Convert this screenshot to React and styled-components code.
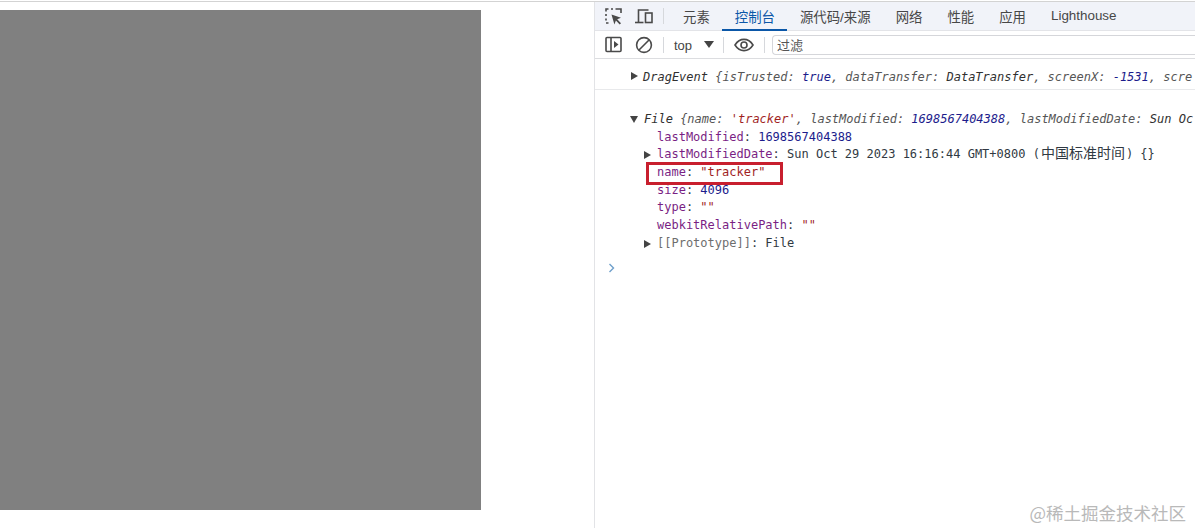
import React from 'react'
import styled, { createGlobalStyle } from 'styled-components'

const GlobalStyle = createGlobalStyle`
    html, body { margin:0; padding:0; background:#fff; }
    body { font-family:"Liberation Sans","Noto Sans CJK SC",sans-serif; }
`

const Page = styled.div`
    position:relative;
    width:1195px;
    height:528px;
    overflow:hidden;
    display:flex;
    flex-direction:column;
    background:#fff;
`
const TopLine = styled.div`
    height:1px;
    margin-top:1px;
    background:#d3d3d3;
    flex:none;
`
const Body = styled.div`
    flex:1;
    display:flex;
    min-height:0;
`
const Viewport = styled.div`
    width:594px;
    flex:none;
    padding-top:8px;
`
const GrayBox = styled.div`
    width:481px;
    height:500px;
    background:#808080;
`
const Devtools = styled.div`
    flex:1;
    border-left:1px solid #e2e3e6;
    display:flex;
    flex-direction:column;
    min-width:0;
`
const TabBar = styled.div`
    height:29px;
    box-sizing:border-box;
    background:#f1f3f9;
    border-bottom:1px solid #e3e4e8;
    display:flex;
    align-items:stretch;
    padding-left:10px;
`
const IconSlot = styled.div`
    width:${props => props.w || 30}px;
    display:flex;
    align-items:center;
    justify-content:${props => props.align || 'flex-start'};
    flex:none;
`
const Divider = styled.div`
    width:1px;
    height:16px;
    background:#d6d8dc;
    align-self:center;
    flex:none;
    margin-right:${props => props.gap || 0}px;
`
const Tab = styled.div`
    padding:0 12.5px;
    display:flex;
    align-items:center;
    font-size:13.4px;
    color:${props => props.active ? '#0b57a8' : '#474747'};
    border-bottom:2px solid ${props => props.active ? '#0b57a8' : 'transparent'};
    margin-bottom:-1px;
`
const Toolbar = styled.div`
    height:28px;
    box-sizing:border-box;
    border-bottom:1px solid #dcdde0;
    display:flex;
    align-items:center;
    padding-left:10px;
`
const Context = styled.div`
    display:flex;
    align-items:center;
    width:59px;
    padding:1px 0 0 10px;
    box-sizing:border-box;
    font-size:13px;
    color:#444;
    flex:none;
`
const Caret = styled.span`
    width:0;
    height:0;
    margin:-1px 0 0 12px;
    border-left:5px solid transparent;
    border-right:5px solid transparent;
    border-top:7px solid #444;
`
const FilterBox = styled.div`
    margin-left:7px;
    flex:1;
    height:20px;
    box-sizing:border-box;
    border:1px solid #d5d6da;
    border-right:none;
    border-radius:4px 0 0 4px;
    font-size:13px;
    line-height:20px;
    padding-left:4px;
    color:#555;
`
const Console = styled.div`
    flex:1;
    font-family:"DejaVu Sans Mono","Noto Sans CJK SC",monospace;
    font-size:12px;
    line-height:17.7px;
    white-space:nowrap;
    overflow:hidden;
    color:#303942;
`
const EventRow = styled.div`
    height:31px;
    padding-top:10px;
    box-sizing:border-box;
    border-bottom:1px solid #e8e9eb;
    padding-left:48px;
    position:relative;
    font-style:italic;
    color:#555;
`
const FileGroup = styled.div`
    padding-top:21px;
`
const Row = styled.div`
    display:flex;
    align-items:center;
    height:17.7px;
    padding-left:${props => props.indent}px;
    font-style:${props => props.italic ? 'italic' : 'normal'};
    color:${props => props.italic ? '#555' : '#303942'};
`
const Arrow = styled.span`
    width:0;
    height:0;
    flex:none;
    margin-right:6px;
    ${props => props.down
        ? 'border-left:4px solid transparent;border-right:4px solid transparent;border-top:7px solid #444;'
        : 'border-top:4px solid transparent;border-bottom:4px solid transparent;border-left:7px solid #444;'}
`
const EventArrow = styled(Arrow)`
    position:absolute;
    left:36px;
    top:13px;
`
const Key = styled.span`
    color:${props => props.dim ? '#6e6e6e' : '#7a1f84'};
`
const Num = styled.span`
    color:#1c1c8c;
`
const Str = styled.span`
    color:#a11f1f;
`
const Obj = styled.span`
    color:#303030;
`
const Plain = styled.span`
    white-space:pre;
`
const ZoneName = styled.span`
    font-size:14px;
    line-height:1;
    margin:0 1px;
`
const NameRow = styled(Row)`
    position:relative;
`
const Highlight = styled.div`
    position:absolute;
    left:51px;
    top:-2px;
    width:137px;
    height:23px;
    box-sizing:border-box;
    border:3px solid #c81f2e;
`
const PromptRow = styled.div`
    padding:8px 0 0 13px;
    height:15px;
    display:flex;
    align-items:center;
`
const Watermark = styled.div`
    position:absolute;
    right:9px;
    bottom:3px;
    font-family:"Noto Sans CJK SC",sans-serif;
    font-size:17.5px;
    line-height:24px;
    color:#b9b9b9;
`

const InspectIcon = () => (
    <svg width="17" height="17" viewBox="0 0 17 17" fill="none" stroke="#4a4a4a" strokeWidth="1.6">
        <path d="M1 3.500V1h2.500M6 1h2M10.500 1h5.500v4M1 6v2M1 10.500v2M1 15h2.500" />
        <path d="M6.500 6.500l9.500 3.300-3.800 1.500 3.800 3.900-1.300 1.300-3.800-3.900-1.500 3.800z" fill="#4a4a4a" stroke="none" />
    </svg>
)
const DeviceIcon = () => (
    <svg width="18" height="16" viewBox="0 0 18 16" fill="none" stroke="#4a4a4a" strokeWidth="1.6">
        <path d="M3.500 14V2h10" />
        <path d="M0 14.500h8.500" />
        <rect x="10.500" y="5" width="6.500" height="9.500" />
    </svg>
)
const SidebarIcon = () => (
    <svg width="17" height="17" viewBox="0 0 17 17" fill="none" stroke="#4a4a4a" strokeWidth="1.6">
        <rect x="1" y="1.500" width="15" height="14" rx="1" />
        <path d="M6 1.500v14" />
        <path d="M9 5l4.500 3.500L9 12z" fill="#4a4a4a" stroke="none" />
    </svg>
)
const ClearIcon = () => (
    <svg width="18" height="18" viewBox="0 0 18 18" fill="none" stroke="#4a4a4a" strokeWidth="1.6">
        <circle cx="9" cy="9" r="7.400" />
        <path d="M4 14L14 4" />
    </svg>
)
const EyeIcon = () => (
    <svg width="20" height="14" viewBox="0 0 20 14" fill="none" stroke="#4a4a4a" strokeWidth="1.6">
        <path d="M1 7c2.400-3.800 5.400-5.600 9-5.600s6.600 1.800 9 5.600c-2.400 3.800-5.400 5.600-9 5.600S3.400 10.800 1 7z" />
        <circle cx="10" cy="7" r="3" />
    </svg>
)
const PromptIcon = () => (
    <svg width="8" height="10" viewBox="0 0 8 10" fill="none" stroke="#6f9fcb" strokeWidth="1.4">
        <path d="M1.500 1l4 4-4 4" />
    </svg>
)

const tabs = [
    { label: '元素' },
    { label: '控制台', active: true },
    { label: '源代码/来源' },
    { label: '网络' },
    { label: '性能' },
    { label: '应用' },
    { label: 'Lighthouse' },
]

const App = () => {
    return (
        <Page>
            <GlobalStyle />
            <TopLine />
            <Body>
                <Viewport>
                    <GrayBox />
                </Viewport>
                <Devtools>
                    <TabBar>
                        <IconSlot w={30}><InspectIcon /></IconSlot>
                        <IconSlot w={28}><DeviceIcon /></IconSlot>
                        <Divider gap={6.5} />
                        {tabs.map(tab => (
                            <Tab key={tab.label} active={tab.active}>{tab.label}</Tab>
                        ))}
                    </TabBar>
                    <Toolbar>
                        <IconSlot w={30}><SidebarIcon /></IconSlot>
                        <IconSlot w={28}><ClearIcon /></IconSlot>
                        <Divider />
                        <Context>top<Caret /></Context>
                        <Divider />
                        <IconSlot w={40} align="center"><EyeIcon /></IconSlot>
                        <Divider />
                        <FilterBox>过滤</FilterBox>
                    </Toolbar>
                    <Console>
                        <EventRow>
                            <EventArrow />
                            <Plain><Obj>DragEvent </Obj>{'{'}isTrusted: <Num>true</Num>, dataTransfer: <Obj>DataTransfer</Obj>, screenX: <Num>-1531</Num>, scre</Plain>
                        </EventRow>
                        <FileGroup>
                            <Row indent={35} italic>
                                <Arrow down />
                                <Plain><Obj>File </Obj>{'{'}name: <Str>'tracker'</Str>, lastModified: <Num>1698567404388</Num>, lastModifiedDate: <Obj>Sun Oc</Obj></Plain>
                            </Row>
                            <Row indent={62}>
                                <Plain><Key>lastModified</Key>: <Num>1698567404388</Num></Plain>
                            </Row>
                            <Row indent={49}>
                                <Arrow />
                                <Plain><Key>lastModifiedDate</Key>: Sun Oct 29 2023 16:16:44 GMT+0800 (<ZoneName>中国标准时间</ZoneName>) {'{}'}</Plain>
                            </Row>
                            <NameRow indent={62}>
                                <Highlight />
                                <Plain><Key>name</Key>: <Str>"tracker"</Str></Plain>
                            </NameRow>
                            <Row indent={62}>
                                <Plain><Key>size</Key>: <Num>4096</Num></Plain>
                            </Row>
                            <Row indent={62}>
                                <Plain><Key>type</Key>: <Str>""</Str></Plain>
                            </Row>
                            <Row indent={62}>
                                <Plain><Key>webkitRelativePath</Key>: <Str>""</Str></Plain>
                            </Row>
                            <Row indent={49}>
                                <Arrow />
                                <Plain><Key dim>[[Prototype]]</Key>: File</Plain>
                            </Row>
                        </FileGroup>
                        <PromptRow><PromptIcon /></PromptRow>
                    </Console>
                </Devtools>
            </Body>
            <Watermark>@稀土掘金技术社区</Watermark>
        </Page>
    )
}

export default App
